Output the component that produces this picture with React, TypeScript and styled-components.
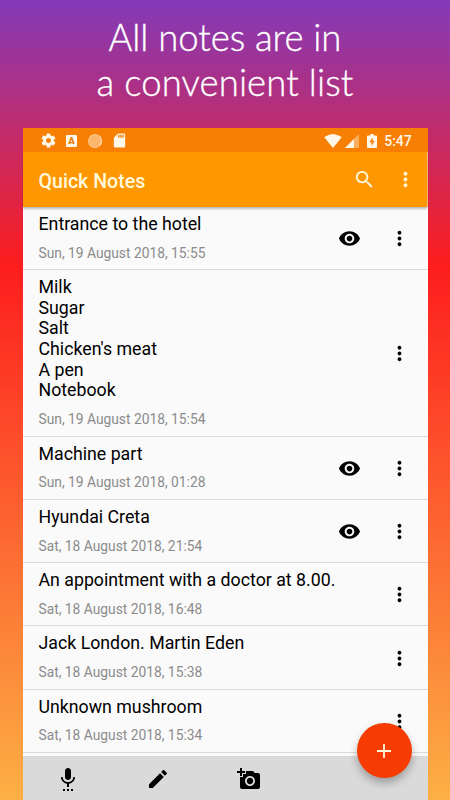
import React from 'react';
import styled, { createGlobalStyle } from 'styled-components';

const GlobalStyle = createGlobalStyle`
  * { box-sizing: border-box; }
  body { margin: 0; overflow: hidden; }
`;

const Page = styled.main`
  width: 450px;
  height: 800px;
  overflow: hidden;
  display: flex;
  flex-direction: column;
  align-items: center;
  background: linear-gradient(180deg, #833ab9 0%, #fd1d1d 33%, #fcb045 100%);
  font-family: Roboto, 'Liberation Sans', sans-serif;
`;

const Headline = styled.h1`
  flex: none;
  height: 128px;
  margin: 0;
  padding-top: 15px;
  color: #fff;
  font-family: Lato, 'Open Sans', sans-serif;
  font-size: 36.5px;
  font-weight: 300;
  line-height: 45px;
  text-align: center;
  -webkit-text-stroke: 0.35px #fff;
`;

const HeadlineLine = styled.span<{ $spacing: number }>`
  display: block;
  letter-spacing: ${(p) => p.$spacing}px;
`;

const Phone = styled.section`
  position: relative;
  flex: none;
  width: 405px;
  height: 672px;
  display: flex;
  flex-direction: column;
  background: #fafafa;
`;

const StatusBar = styled.div`
  flex: none;
  height: 24px;
  padding: 1px 16px 0 17px;
  display: flex;
  align-items: center;
  justify-content: space-between;
  background: #f77f03;
  color: #fff8e8;
  font-size: 14px;
  font-weight: 500;
`;

const StatusGroup = styled.div<{ $gap: number }>`
  display: flex;
  align-items: center;
  gap: ${(p) => p.$gap}px;
`;

const Clock = styled.span`
  margin-left: 4px;
  letter-spacing: -0.1px;
`;

const AppBar = styled.header`
  position: relative;
  z-index: 1;
  flex: none;
  height: 55px;
  padding: 0 11px 0 16px;
  display: flex;
  align-items: center;
  background: #ff9703;
  color: #fff9dc;
  box-shadow: 0 1px 3px rgba(0, 0, 0, 0.4);
  clip-path: inset(0 0 -5px 0);
`;

const AppTitle = styled.h2`
  flex: 1;
  margin: 3px 0 0;
  font-size: 19.6px;
  font-weight: 500;
`;

const Icon = styled.svg<{ $size: number }>`
  display: block;
  flex: none;
  width: ${(p) => p.$size}px;
  height: ${(p) => p.$size}px;
  fill: currentColor;
`;

const BatteryIcon = styled.svg`
  display: block;
  width: 10px;
  height: 14px;
  margin-left: 5px;
  fill: currentColor;
`;

const BarButton = styled.button<{ $gap?: number }>`
  padding: 0;
  border: 0;
  margin-left: ${(p) => p.$gap ?? 0}px;
  background: none;
  color: inherit;
`;

const List = styled.ul`
  flex: 1;
  min-height: 0;
  overflow: hidden;
  margin: 0;
  padding: 0;
  list-style: none;
`;

const Row = styled.li`
  display: flex;
  align-items: center;
  padding: 7px 17px 7.6px 16px;
  border-bottom: 1px solid #dadada;
  color: #000;
`;

const RowText = styled.div`
  flex: 1;
  min-width: 0;
`;

const NoteText = styled.p`
  margin: 0;
  white-space: pre-line;
  font-size: 17.75px;
  line-height: 20.6px;
`;

const NoteDate = styled.time`
  display: block;
  margin-top: 10.1px;
  color: #8b8b8b;
  font-size: 13.8px;
  line-height: 17px;
`;

const RowActions = styled.div`
  display: flex;
  align-items: center;
  gap: 26.5px;
  padding-top: 2px;
`;

const BottomBar = styled.nav`
  flex: none;
  height: 44px;
  padding: 1px 0 0 33px;
  display: flex;
  align-items: center;
  gap: 66.5px;
  background: #dadada;
  color: #000;
`;

const AddButton = styled.button`
  position: absolute;
  right: 16px;
  bottom: 22px;
  width: 55px;
  height: 55px;
  padding: 0;
  display: grid;
  place-items: center;
  border: 0;
  border-radius: 50%;
  background: #f63c02;
  color: #fff5d8;
  box-shadow: 0 5px 8px rgba(0, 0, 0, 0.28);
`;

const paths = {
  gear: 'M19.43 12.98c.04-.32.07-.64.07-.98s-.03-.66-.07-.98l2.11-1.65c.19-.15.24-.42.12-.64l-2-3.46c-.12-.22-.39-.3-.61-.22l-2.49 1c-.52-.4-1.08-.73-1.69-.98l-.38-2.65C14.46 2.18 14.25 2 14 2h-4c-.25 0-.46.18-.49.42l-.38 2.65c-.61.25-1.17.59-1.69.98l-2.49-1c-.23-.09-.49 0-.61.22l-2 3.46c-.13.22-.07.49.12.64l2.11 1.65c-.04.32-.07.65-.07.98s.03.66.07.98l-2.11 1.65c-.19.15-.24.42-.12.64l2 3.46c.12.22.39.3.61.22l2.49-1c.52.4 1.08.73 1.69.98l.38 2.65c.03.24.24.42.49.42h4c.25 0 .46-.18.49-.42l.38-2.65c.61-.25 1.17-.59 1.69-.98l2.49 1c.23.09.49 0 .61-.22l2-3.46c.12-.22.07-.49-.12-.64l-2.11-1.65zM12 15.5c-1.93 0-3.5-1.57-3.5-3.5s1.57-3.5 3.5-3.5 3.5 1.57 3.5 3.5-1.57 3.5-3.5 3.5z',
  sd: 'M18 2h-8L4.02 8 4 20c0 1.100.9 2 2 2h12c1.100 0 2-.9 2-2V4c0-1.100-.9-2-2-2zm-6 6h-2V4h2v4zm3 0h-2V4h2v4zm3 0h-2V4h2v4z',
  wifi: 'M12.010 21.490L23.640 7c-.45-.34-4.930-4-11.640-4C5.280 3 .81 6.660.36 7l11.630 14.490.01.010.01-.01z',
  search: 'M15.5 14h-.79l-.28-.27C15.410 12.590 16 11.110 16 9.500 16 5.910 13.090 3 9.500 3S3 5.910 3 9.500 5.910 16 9.500 16c1.610 0 3.090-.59 4.230-1.570l.27.28v.79l5 4.990L20.490 19l-4.990-5zm-6 0C7.010 14 5 11.990 5 9.500S7.010 5 9.500 5 14 7.010 14 9.500 11.990 14 9.500 14z',
  more: 'M12 8c1.100 0 2-.9 2-2s-.9-2-2-2-2 .9-2 2 .9 2 2 2zm0 2c-1.100 0-2 .9-2 2s.9 2 2 2 2-.9 2-2-.9-2-2-2zm0 6c-1.100 0-2 .9-2 2s.9 2 2 2 2-.9 2-2-.9-2-2-2z',
  eye: 'M12 4.500C7 4.500 2.730 7.610 1 12c1.730 4.390 6 7.500 11 7.500s9.270-3.110 11-7.500c-1.730-4.390-6-7.500-11-7.500zM12 17c-2.760 0-5-2.240-5-5s2.240-5 5-5 5 2.240 5 5-2.240 5-5 5zm0-8c-1.660 0-3 1.340-3 3s1.340 3 3 3 3-1.340 3-3-1.340-3-3-3z',
  mic: 'M12 13c1.660 0 2.990-1.340 2.990-3L15 4c0-1.660-1.340-3-3-3S9 2.340 9 4v6c0 1.660 1.340 3 3 3zM7 22h2v2H7zm4 0h2v2h-2zm4 0h2v2h-2zM19 10h-1.700c0 3-2.540 5.100-5.300 5.100S6.700 13 6.700 10H5c0 3.410 2.720 6.230 6 6.720V20h2v-3.280c3.280-.49 6-3.310 6-6.720z',
  pencil: 'M3 17.250V21h3.750L17.810 9.940l-3.750-3.750L3 17.250zM20.710 7.040c.39-.39.39-1.020 0-1.410l-2.340-2.340c-.39-.39-1.020-.39-1.410 0l-1.830 1.830 3.750 3.750 1.830-1.830z',
  camera: 'M3 4V1h2v3h3v2H5v3H3V6H0V4h3zm3 6V7h3V4h7l1.830 2H21c1.100 0 2 .9 2 2v12c0 1.100-.9 2-2 2H5c-1.100 0-2-.9-2-2V10h3zm7 9c2.760 0 5-2.240 5-5s-2.240-5-5-5-5 2.240-5 5 2.240 5 5 5zm-3.200-5c0 1.770 1.430 3.200 3.200 3.200s3.200-1.430 3.200-3.200-1.430-3.200-3.200-3.200-3.200 1.430-3.200 3.200z',
  plus: 'M19 12.900h-6.100V19h-1.800v-6.100H5v-1.800h6.100V5h1.800v6.100H19v1.800z',
};

function Glyph({ name, size }: { name: keyof typeof paths; size: number }) {
  return (
    <Icon $size={size} viewBox="0 0 24 24" aria-hidden="true">
      <path d={paths[name]} />
    </Icon>
  );
}

const BadgeLetter = styled.span`
  width: 11px;
  height: 12px;
  margin-right: 1px;
  border-radius: 1px;
  background: #fff8e8;
  color: #e97c0c;
  font-size: 9.5px;
  font-weight: 900;
  line-height: 12px;
  text-align: center;
`;

const Spinner = styled.span`
  width: 14px;
  height: 14px;
  border-radius: 50%;
  border: 1px dotted #ffe0ae;
  border-right: 1px solid #ffe9c8;
  background: #fdb76c;
`;

const notes = [
  { text: 'Entrance to the hotel', date: 'Sun, 19 August 2018, 15:55', photo: true },
  { text: "Milk\nSugar\nSalt\nChicken's meat\nA pen\nNotebook", date: 'Sun, 19 August 2018, 15:54', photo: false },
  { text: 'Machine part', date: 'Sun, 19 August 2018, 01:28', photo: true },
  { text: 'Hyundai Creta', date: 'Sat, 18 August 2018, 21:54', photo: true },
  { text: 'An appointment with a doctor at 8.00.', date: 'Sat, 18 August 2018, 16:48', photo: false },
  { text: 'Jack London. Martin Eden', date: 'Sat, 18 August 2018, 15:38', photo: false },
  { text: 'Unknown mushroom', date: 'Sat, 18 August 2018, 15:34', photo: false },
];

export default function App() {
  return (
    <>
      <GlobalStyle />
      <Page>
        <Headline>
          <HeadlineLine $spacing={-0.05}>All notes are in</HeadlineLine>
          <HeadlineLine $spacing={0.1}>a convenient list</HeadlineLine>
        </Headline>
        <Phone>
          <StatusBar>
            <StatusGroup $gap={9.5}>
              <Glyph name="gear" size={17} />
              <BadgeLetter>A</BadgeLetter>
              <Spinner />
              <Glyph name="sd" size={17} />
            </StatusGroup>
            <StatusGroup $gap={3}>
              <Glyph name="wifi" size={18} />
              <Icon $size={14} viewBox="0 0 14 14" aria-hidden="true">
                <path d="M0 14L14 0v14z" opacity="0.4" />
                <path d="M0 14L9 5v9z" />
              </Icon>
              <BatteryIcon viewBox="0 0 9 14" preserveAspectRatio="none" aria-hidden="true">
                <path
                  fillRule="evenodd"
                  d="M3 0h3v1.500h2.200q.8 0 .8.800v10.900q0 .8-.8.800H.8q-.8 0-.8-.8V2.300q0-.8.8-.8H3zM5.200 3.600L2.100 8.300h1.900v3.500L7 7.100H5.200z"
                />
              </BatteryIcon>
              <Clock>5:47</Clock>
            </StatusGroup>
          </StatusBar>
          <AppBar>
            <AppTitle>Quick Notes</AppTitle>
            <BarButton aria-label="Search"><Glyph name="search" size={23} /></BarButton>
            <BarButton $gap={18} aria-label="More options"><Glyph name="more" size={23} /></BarButton>
          </AppBar>
          <List>
            {notes.map((note) => (
              <Row key={note.date}>
                <RowText>
                  <NoteText>{note.text}</NoteText>
                  <NoteDate>{note.date}</NoteDate>
                </RowText>
                <RowActions>
                  {note.photo && <Glyph name="eye" size={23} />}
                  <BarButton aria-label="Note menu"><Glyph name="more" size={23} /></BarButton>
                </RowActions>
              </Row>
            ))}
          </List>
          <BottomBar>
            <BarButton aria-label="Record"><Glyph name="mic" size={24} /></BarButton>
            <BarButton aria-label="Write"><Glyph name="pencil" size={24} /></BarButton>
            <BarButton aria-label="Take photo"><Glyph name="camera" size={24} /></BarButton>
          </BottomBar>
          <AddButton aria-label="Add note"><Glyph name="plus" size={24} /></AddButton>
        </Phone>
      </Page>
    </>
  );
}
